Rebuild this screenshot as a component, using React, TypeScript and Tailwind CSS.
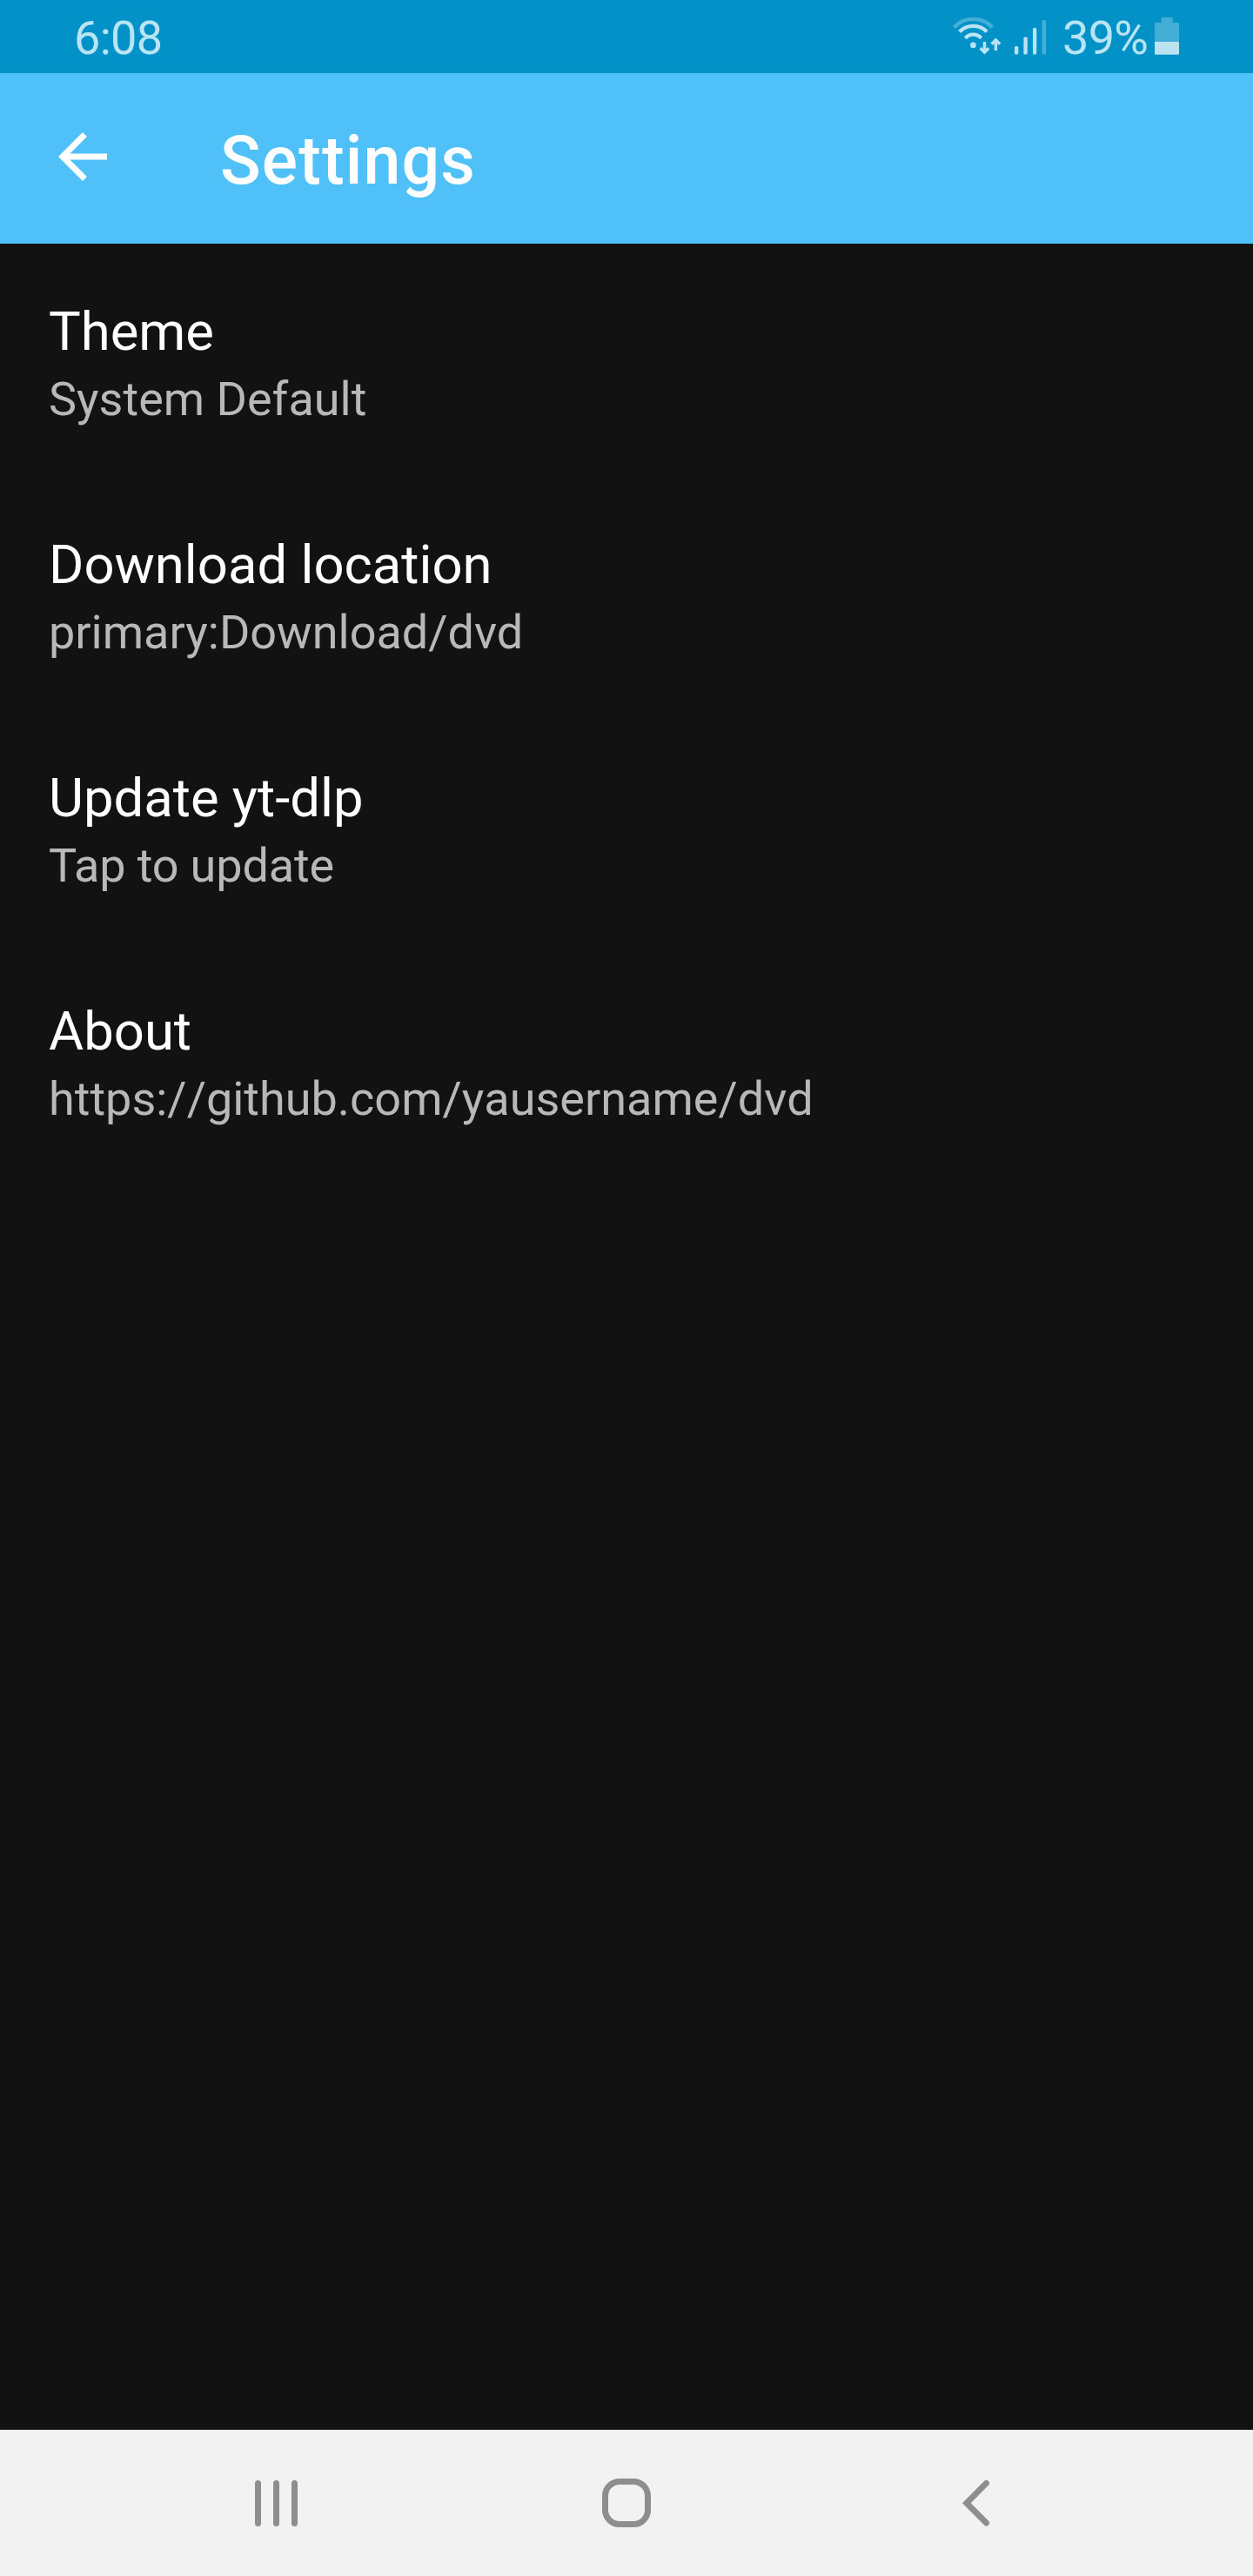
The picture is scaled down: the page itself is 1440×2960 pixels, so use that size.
const settings = [
  { title: "Theme", summary: "System Default", summaryClass: "" },
  { title: "Download location", summary: "primary:Download/dvd", summaryClass: "" },
  { title: "Update yt-dlp", summary: "Tap to update", summaryClass: "tracking-[-0.15px]" },
  { title: "About", summary: "https://github.com/yausername/dvd", summaryClass: "[font-kerning:none]" },
];

function WifiIcon() {
  return (
    <svg width="58" height="46" viewBox="14 18 58 46" fill="none" className="text-[#b9e4f3]" stroke="currentColor" strokeWidth="4.3">
      <path d="M16.5 31.5A30 30 0 0 1 60.5 31.5" className="text-[#45b0d7]" stroke="currentColor" />
      <path d="M22.8 36.5A22 22 0 0 1 54.2 36.5" />
      <path d="M29.4 43.8A12 12 0 0 1 47.6 43.8" />
      <circle cx="38.4" cy="51.9" r="3.3" fill="currentColor" stroke="none" />
      <path d="M51.5 48V60M46.7 55.2L51.5 60L56.3 55.2" strokeWidth="3.4" />
      <path d="M64.4 58V46M59.6 50.8L64.4 46L69.2 50.8" strokeWidth="3.4" />
    </svg>
  );
}

function SignalIcon() {
  return (
    <svg width="36" height="40" viewBox="86 23 36 40" className="text-[#b9e4f3]" fill="currentColor">
      <rect x="86" y="53" width="4.3" height="9.5" rx="1.6" />
      <rect x="96.4" y="42.6" width="4.4" height="19.9" rx="1.6" />
      <rect x="107" y="32" width="4.3" height="30.5" rx="1.6" />
      <rect x="117.6" y="23" width="4.4" height="39.5" rx="1.6" className="text-[#45b0d7]" fill="currentColor" />
    </svg>
  );
}

function BatteryIcon() {
  return (
    <svg width="28" height="43" viewBox="0 0 28 43">
      <path d="M9 0H19.6Q20.8 0 20.8 1.2V6H26.5Q28 6 28 7.5V28H0V7.5Q0 6 1.5 6H7.7V1.2Q7.7 0 9 0Z" fill="#42add5" />
      <path d="M0 28H28V41.2Q28 42.7 26.5 42.7H1.5Q0 42.7 0 41.2Z" fill="#bbe3f2" />
    </svg>
  );
}

export default function App() {
  return (
    <div className="flex h-[2960px] w-[1440px] flex-col overflow-hidden bg-[#121212] font-['Roboto',sans-serif]">
      <header className="flex h-[84px] shrink-0 items-start bg-[#0292c7] px-[85px] text-[54px] leading-[63px] tracking-[-0.7px] text-[#b9e4f3]">
        <span className="mt-3">6:08</span>
        <div className="ml-auto flex items-start">
          <div className="mt-[18px]"><WifiIcon /></div>
          <div className="ml-[14px] mt-[23px]"><SignalIcon /></div>
          <span className="ml-[19px] mt-3 w-[106px] whitespace-nowrap">39%</span>
          <div className="mt-5"><BatteryIcon /></div>
        </div>
      </header>

      <div className="flex h-[196px] shrink-0 items-start bg-[#4fc1f8] pl-[53px] text-white">
        <button aria-label="Back" className="mt-[54px]">
          <svg width="84" height="84" viewBox="0 0 24 24" fill="currentColor">
            <path d="M20 11H7.83l5.59-5.59L12 4l-8 8 8 8 1.41-1.41L7.83 13H20z" />
          </svg>
        </button>
        <h1 className="ml-[116px] mt-[56px] text-[77px] font-medium leading-[90px] tracking-[1.15px]">Settings</h1>
      </div>

      <main className="flex-1">
        {settings.map((item) => (
          <section key={item.title} className="flex h-[268px] flex-col gap-[10px] px-14 pt-[65px]">
            <h2 className="text-[61.6px] leading-[72px] text-white">{item.title}</h2>
            <p className={`text-[54px] leading-[63px] text-[#b8b8b8] ${item.summaryClass}`}>{item.summary}</p>
          </section>
        ))}
      </main>

      <nav className="flex h-[168px] shrink-0 items-center bg-[#f2f2f2] pl-[293px] text-[#8e8e8e]">
        <button aria-label="Recent apps" className="mt-px flex gap-[14px]">
          <span className="h-[53px] w-[7px] rounded-full bg-current" />
          <span className="h-[53px] w-[7px] rounded-full bg-current" />
          <span className="h-[53px] w-[7px] rounded-full bg-current" />
        </button>
        <button aria-label="Home" className="ml-[350px] size-[56px] rounded-[20px] border-[7px] border-current" />
        <button aria-label="Back" className="ml-[357px]">
          <svg width="34" height="56" viewBox="0 0 34 56" fill="none" stroke="currentColor" strokeWidth="7" strokeLinecap="round">
            <path d="M28.5 5.4L5.8 28.2L28.5 51" />
          </svg>
        </button>
      </nav>
    </div>
  );
}
